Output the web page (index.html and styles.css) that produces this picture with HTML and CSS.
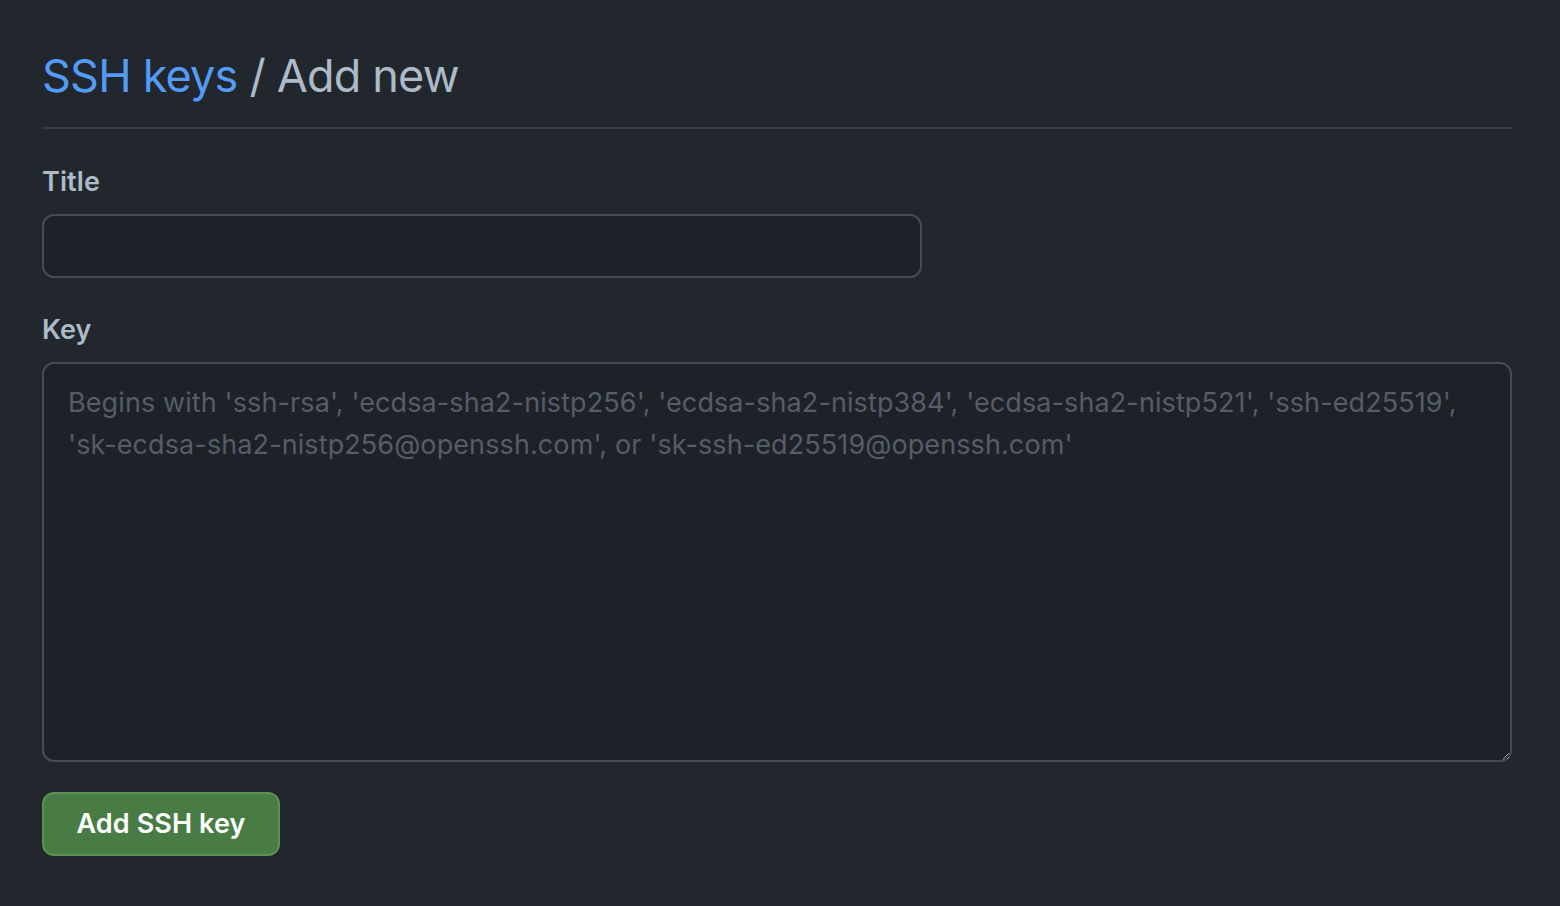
FILE: index.html
```html
<!DOCTYPE html>
<html lang="en">
<head>
<meta charset="utf-8">
<title>Add new SSH key</title>
<link rel="stylesheet" href="styles.css">
</head>
<body>
<main class="page">
  <div class="subhead">
    <h2 class="subhead-heading"><a class="link" href="#">SSH keys</a> / Add new</h2>
  </div>
  <form class="form">
    <div class="form-group">
      <label class="label" for="title">Title</label>
      <input class="input" id="title" type="text">
    </div>
    <div class="form-group">
      <label class="label" for="key">Key</label>
      <textarea class="textarea" id="key" placeholder="Begins with 'ssh-rsa', 'ecdsa-sha2-nistp256', 'ecdsa-sha2-nistp384', 'ecdsa-sha2-nistp521', 'ssh-ed25519', 'sk-ecdsa-sha2-nistp256@openssh.com', or 'sk-ssh-ed25519@openssh.com'"></textarea>
    </div>
    <div class="actions">
      <button class="btn-primary" type="button">Add SSH key</button>
    </div>
  </form>
</main>
</body>
</html>
```
FILE: styles.css
```css
html, body {
  margin: 0;
  padding: 0;
  background: #22272e;
  color-scheme: dark;
}
body {
  font-family: Inter, "Noto Sans", "Liberation Sans", sans-serif;
  color: #adbac7;
}
.page {
  padding: 40px 48px 0 42px;
}
.subhead {
  padding-bottom: 15px;
  border-bottom: 2px solid #373e47;
}
.subhead-heading {
  margin: 0;
  font-size: 45px;
  font-weight: 400;
  line-height: 72px;
  letter-spacing: -0.8px;
  color: #adbac7;
}
.link {
  color: #539bf5;
  text-decoration: none;
}
.form-group {
  margin-top: 32px;
  display: flex;
  flex-direction: column;
  align-items: flex-start;
}
.form-group + .form-group {
  margin-top: 31px;
}
.label {
  font-size: 27px;
  font-weight: 600;
  line-height: 42px;
  margin-bottom: 11px;
  letter-spacing: 0.1px;
  color: #adbac7;
}
.input, .textarea {
  box-sizing: border-box;
  background: #1e2228;
  border: 2px solid #444c56;
  border-radius: 12px;
  color: #adbac7;
  font-family: inherit;
  font-size: 27px;
  line-height: 42px;
  outline: none;
  margin: 0;
}
.input {
  width: 880px;
  height: 64px;
  padding: 0 24px;
}
.textarea {
  width: 1470px;
  height: 400px;
  padding: 18px 24px 16px;
  resize: vertical;
  letter-spacing: 0.1px;
}
.textarea::placeholder {
  color: #545d68;
  opacity: 1;
}
.actions {
  margin-top: 30px;
}
.btn-primary {
  box-sizing: border-box;
  height: 64px;
  padding: 0 32.5px;
  background: #487c44;
  border: 2px solid #5a9156;
  border-radius: 12px;
  color: #ffffff;
  font-family: inherit;
  font-size: 27px;
  font-weight: 600;
  line-height: 40px;
  letter-spacing: 0.1px;
  cursor: pointer;
}
```
